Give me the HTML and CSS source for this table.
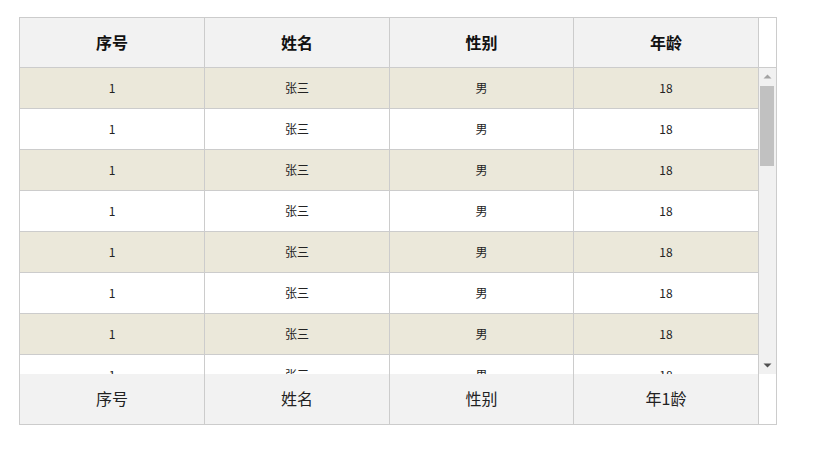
FILE: index.html
```html
<!DOCTYPE html>
<html lang="zh">
<head>
<meta charset="utf-8">
<title>表格</title>
<link rel="stylesheet" href="styles.css">
</head>
<body>
<div class="page">
  <div class="grid">
    <div class="row head">
      <div class="cell">序号</div>
      <div class="cell">姓名</div>
      <div class="cell">性别</div>
      <div class="cell">年龄</div>
    </div>
    <div class="body">
      <div class="rows">
        <div class="row item odd"><div class="cell">1</div><div class="cell">张三</div><div class="cell">男</div><div class="cell">18</div></div>
        <div class="row item"><div class="cell">1</div><div class="cell">张三</div><div class="cell">男</div><div class="cell">18</div></div>
        <div class="row item odd"><div class="cell">1</div><div class="cell">张三</div><div class="cell">男</div><div class="cell">18</div></div>
        <div class="row item"><div class="cell">1</div><div class="cell">张三</div><div class="cell">男</div><div class="cell">18</div></div>
        <div class="row item odd"><div class="cell">1</div><div class="cell">张三</div><div class="cell">男</div><div class="cell">18</div></div>
        <div class="row item"><div class="cell">1</div><div class="cell">张三</div><div class="cell">男</div><div class="cell">18</div></div>
        <div class="row item odd"><div class="cell">1</div><div class="cell">张三</div><div class="cell">男</div><div class="cell">18</div></div>
        <div class="row item"><div class="cell">1</div><div class="cell">张三</div><div class="cell">男</div><div class="cell">18</div></div>
        <div class="row item odd"><div class="cell">1</div><div class="cell">张三</div><div class="cell">男</div><div class="cell">18</div></div>
        <div class="row item"><div class="cell">1</div><div class="cell">张三</div><div class="cell">男</div><div class="cell">18</div></div>
      </div>
      <div class="scrollbar">
        <div class="sb-btn">
          <svg width="9" height="5" viewBox="0 0 9 5"><path d="M0.5 4.5 L4.5 0.5 L8.5 4.5 Z" fill="#a3a3a3"/></svg>
        </div>
        <div class="sb-track">
          <div class="sb-thumb"></div>
        </div>
        <div class="sb-btn">
          <svg width="9" height="5" viewBox="0 0 9 5"><path d="M0.5 0.5 L4.5 4.5 L8.5 0.5 Z" fill="#505050"/></svg>
        </div>
      </div>
    </div>
    <div class="row foot">
      <div class="cell">序号</div>
      <div class="cell">姓名</div>
      <div class="cell">性别</div>
      <div class="cell">年1龄</div>
    </div>
  </div>
</div>
</body>
</html>
```
FILE: styles.css
```css
html, body {
  margin: 0;
  padding: 0;
  background: #ffffff;
}

.page {
  padding: 17px 0 0 19px;
  font-family: "Noto Sans CJK SC", "Noto Sans", sans-serif;
  color: #333333;
}

.grid {
  width: 758px;
  box-sizing: border-box;
  border: 1px solid #cccccc;
  display: flex;
  flex-direction: column;
  background: #ffffff;
}

.row {
  display: grid;
  grid-template-columns: 185px 185px 184px 185px;
}

.cell {
  box-sizing: border-box;
  border-right: 1px solid #cccccc;
  display: flex;
  align-items: center;
  justify-content: center;
  padding-bottom: 2px;
  white-space: nowrap;
}

.head {
  height: 50px;
  box-sizing: border-box;
  border-bottom: 1px solid #cccccc;
}

.head .cell {
  background: #f2f2f2;
  font-size: 16px;
  font-weight: bold;
  color: #111111;
}

.body {
  height: 306px;
  display: flex;
}

.rows {
  width: 739px;
  overflow: hidden;
}

.item {
  height: 41px;
  box-sizing: border-box;
  border-bottom: 1px solid #cccccc;
  font-size: 12px;
  color: #222222;
  background: #ffffff;
}

.item.odd {
  background: #ebe8da;
}

.scrollbar {
  width: 17px;
  background: #f1f1f1;
  display: flex;
  flex-direction: column;
}

.sb-btn {
  height: 17px;
  display: flex;
  align-items: center;
  justify-content: center;
}

.sb-btn svg {
  display: block;
}

.sb-track {
  flex: 1;
  display: flex;
  flex-direction: column;
}

.sb-thumb {
  height: 80px;
  margin: 1px 2px 0 1px;
  background: #c1c1c1;
}

.foot {
  height: 50px;
}

.foot .cell {
  background: #f2f2f2;
  font-size: 16px;
  color: #222222;
}
```
